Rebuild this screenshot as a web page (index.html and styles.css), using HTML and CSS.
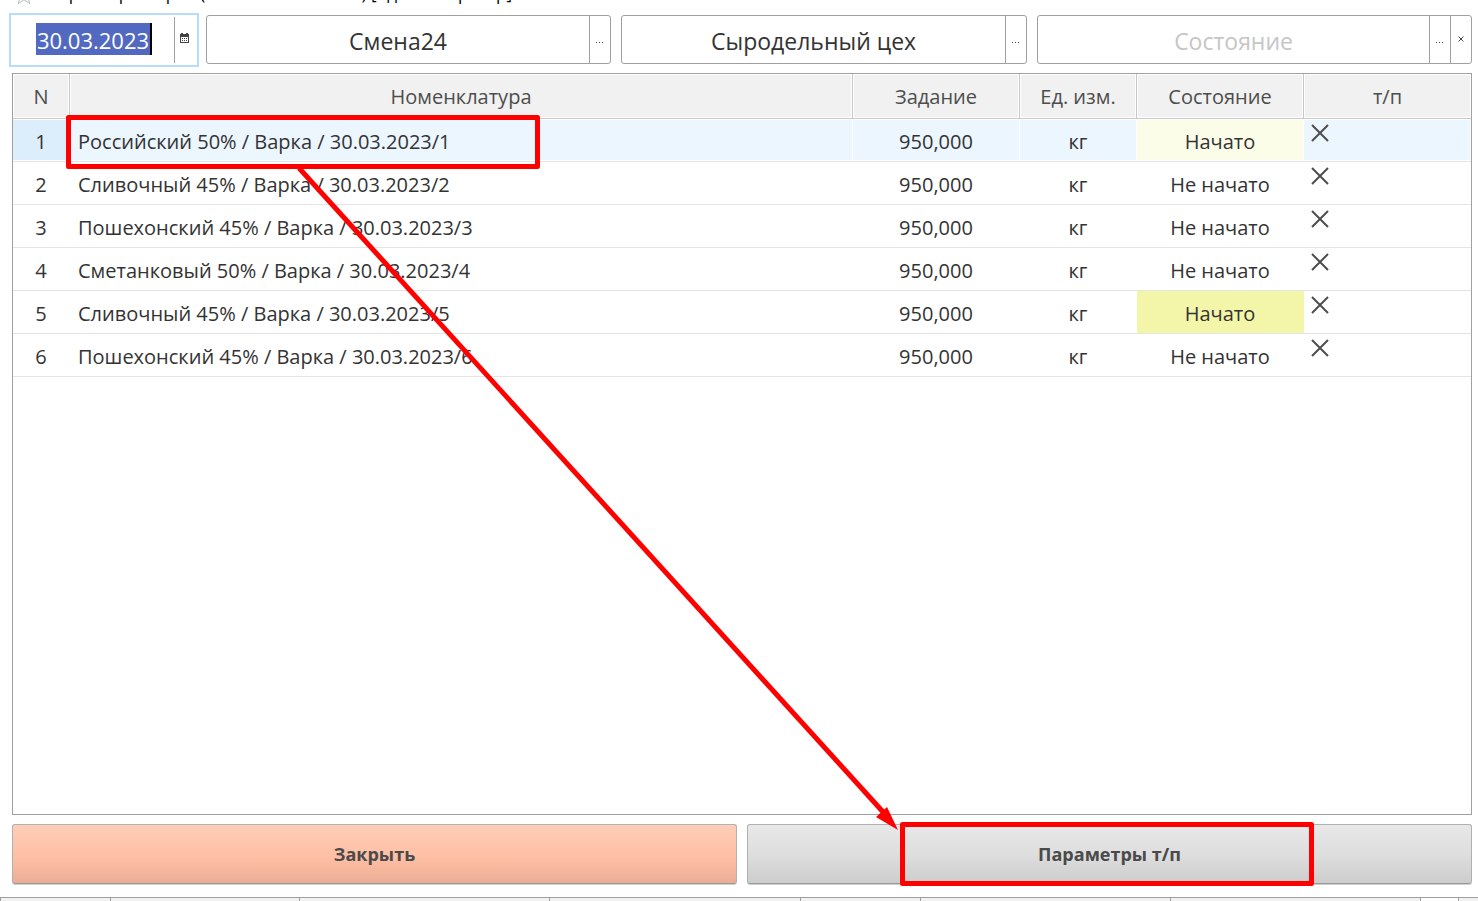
FILE: index.html
```html
<!DOCTYPE html>
<html lang="ru">
<head>
<meta charset="utf-8">
<title>Параметры варки</title>
<link rel="stylesheet" href="styles.css">
</head>
<body>
<header class="title">
  <svg class="star" viewBox="0 0 20 20"><path d="M10 1l2.4 6.4 6.6.3-5.2 4.2 1.9 6.6L10 14.700l-5.700 3.800 1.900-6.600L1 7.700l6.600-.3z"/></svg>
  <h1>Параметры варки (Основной заказ 24) [Администратор]</h1>
</header>
<main class="content">
  <form class="filters">
    <div class="field date">
      <div class="datebox"><input class="selected" type="text" value="30.03.2023" aria-label="Дата"></div>
      <button type="button" aria-label="Календарь"><svg class="cal" viewBox="0 0 9 10"><path d="M0 1h9v9H0zM1 4v5h7V4z" fill-rule="evenodd"/><path d="M1 0h2v1H1zM6 0h2v1H6zM2 5h1v1H2zM4 5h1v1H4zM6 5h1v1H6zM2 7h1v1H2zM4 7h1v1H4zM6 7h1v1H6z"/></svg></button>
    </div>
    <div class="field shift">
      <input type="text" value="Смена24" aria-label="Смена">
      <button type="button" aria-label="Выбрать смену"><svg class="dots" viewBox="0 0 8 1"><path d="M0 0h1v1H0zM3 0h1v1H3zM6 0h1v1H6z"/></svg></button>
    </div>
    <div class="field shop">
      <input type="text" value="Сыродельный цех" aria-label="Цех">
      <button type="button" aria-label="Выбрать цех"><svg class="dots" viewBox="0 0 8 1"><path d="M0 0h1v1H0zM3 0h1v1H3zM6 0h1v1H6z"/></svg></button>
    </div>
    <div class="field state">
      <input type="text" placeholder="Состояние" aria-label="Состояние">
      <button type="button" aria-label="Выбрать состояние"><svg class="dots" viewBox="0 0 8 1"><path d="M0 0h1v1H0zM3 0h1v1H3zM6 0h1v1H6z"/></svg></button>
      <button type="button" class="clear" aria-label="Очистить"><svg class="tiny" viewBox="0 0 6 6"><path d="M.5.5l5 5M5.500.5l-5 5"/></svg></button>
    </div>
  </form>
  <section class="panel">
    <table>
      <colgroup><col class="c-n"><col class="c-name"><col class="c-task"><col class="c-unit"><col class="c-state"><col class="c-tp"></colgroup>
      <thead><tr><th>N</th><th>Номенклатура</th><th>Задание</th><th>Ед. изм.</th><th>Состояние</th><th>т/п</th></tr></thead>
      <tbody>
        <tr class="current"><td>1</td><td class="name">Российский 50% / Варка / 30.03.2023/1</td><td>950,000</td><td>кг</td><td class="started">Начато</td><td class="tp"><svg viewBox="0 0 18 18"><path d="M1 1l16 16M17 1L1 17"/></svg></td></tr>
        <tr><td>2</td><td class="name">Сливочный 45% / Варка / 30.03.2023/2</td><td>950,000</td><td>кг</td><td>Не начато</td><td class="tp"><svg viewBox="0 0 18 18"><path d="M1 1l16 16M17 1L1 17"/></svg></td></tr>
        <tr><td>3</td><td class="name">Пошехонский 45% / Варка / 30.03.2023/3</td><td>950,000</td><td>кг</td><td>Не начато</td><td class="tp"><svg viewBox="0 0 18 18"><path d="M1 1l16 16M17 1L1 17"/></svg></td></tr>
        <tr><td>4</td><td class="name">Сметанковый 50% / Варка / 30.03.2023/4</td><td>950,000</td><td>кг</td><td>Не начато</td><td class="tp"><svg viewBox="0 0 18 18"><path d="M1 1l16 16M17 1L1 17"/></svg></td></tr>
        <tr><td>5</td><td class="name">Сливочный 45% / Варка / 30.03.2023/5</td><td>950,000</td><td>кг</td><td class="started">Начато</td><td class="tp"><svg viewBox="0 0 18 18"><path d="M1 1l16 16M17 1L1 17"/></svg></td></tr>
        <tr><td>6</td><td class="name">Пошехонский 45% / Варка / 30.03.2023/6</td><td>950,000</td><td>кг</td><td>Не начато</td><td class="tp"><svg viewBox="0 0 18 18"><path d="M1 1l16 16M17 1L1 17"/></svg></td></tr>
      </tbody>
    </table>
  </section>
  <div class="actions">
    <button type="button" class="close">Закрыть</button>
    <button type="button" class="params">Параметры т/п</button>
  </div>
</main>
<footer class="tabs"><i class="t1"></i><i class="t2"></i><i class="t3"></i><i class="t3"></i><i class="t4"></i><i class="t3"></i><i class="t3"></i><i class="t5"></i><i class="t6"></i></footer>
<svg class="marks" viewBox="0 0 1478 901" preserveAspectRatio="none" aria-hidden="true">
  <rect x="68.500" y="117.500" width="469" height="49"/>
  <rect x="902.500" y="824.500" width="409" height="59"/>
  <path class="line" d="M299 168L884 813"/>
  <path class="head" d="M898 830L876 817L887 807z"/>
</svg>
</body>
</html>
```
FILE: styles.css
```css
* { box-sizing: border-box; }
body {
  margin: 0;
  min-height: 100vh;
  display: flex;
  flex-direction: column;
  position: relative;
  background: #fff;
  color: #333;
  font-family: "Open Sans", "Noto Sans", sans-serif;
  font-size: 20px;
}
button, input { font: inherit; color: inherit; }
.title {
  height: 5px;
  padding-left: 14px;
  display: flex;
  align-items: flex-end;
  gap: 13px;
  overflow: hidden;
}
.title h1 {
  margin: 0;
  font-size: 17px;
  line-height: 22px;
  font-weight: 400;
  color: #000;
  white-space: nowrap;
}
.star { width: 20px; height: 20px; flex: none; fill: none; stroke: #b4bcc4; }
.content {
  flex: 1;
  display: flex;
  flex-direction: column;
  padding: 8px 6px 13px 12px;
}
.filters { display: flex; align-items: flex-start; gap: 10px; margin-bottom: 6px; }
.field {
  display: flex;
  min-width: 0;
  height: 49px;
  margin-top: 2px;
  border: 1px solid #a0a0a0;
  border-radius: 3px;
  font-size: 23px;
  overflow: hidden;
}
.field input {
  flex: 1;
  min-width: 0;
  border: 0;
  padding: 2px 0 0;
  background: none;
  text-align: center;
  outline: 0;
}
.field input::placeholder { color: #c6c6c6; opacity: 1; }
.field button {
  flex: none;
  width: 21px;
  padding: 0;
  border: 0;
  border-left: 1px solid #a0a0a0;
  background: none;
  display: flex;
  align-items: center;
  justify-content: center;
}
.field svg { fill: #444; display: block; }
.dots { width: 8px; height: 1px; margin-top: 6px; }
.tiny { width: 6px; height: 6px; stroke: #444; }
.cal { width: 9px; height: 10px; }
.field .clear { padding-bottom: 1px; }
.date {
  flex: none;
  width: 190px;
  height: 54px;
  border: 2px solid #b8dcfa;
  border-radius: 0;
  margin: 0 -3px 0 -3px;
  padding: 2px 0;
}
.datebox { flex: 1; display: flex; align-items: center; justify-content: center; padding: 0 0 2px 3px; }
.date .datebox .selected {
  flex: none;
  width: 116px;
  height: 32px;
  padding: 2px 0 0;
  border-right: 2px solid #000;
  background: #5169c1;
  color: #fff;
  font-size: 22px;
}
.date button { width: 23px; padding: 0 4px 4px 0; }
.shift { flex: 405 1 0; }
.shop { flex: 406 1 0; }
.state { flex: 435 1 0; }
.panel { flex: 1; border: 1px solid #a0a0a0; }
table { width: 100%; border-collapse: separate; border-spacing: 0; table-layout: fixed; }
.c-n { width: 57px; }
.c-task { width: 167px; }
.c-unit { width: 117px; }
.c-state { width: 167px; }
.c-tp { width: 167px; }
th {
  height: 45px;
  padding: 0;
  font-weight: 400;
  color: #4d4d4d;
  background: #f1f1f1;
  border-right: 1px solid #c8c8c8;
  border-bottom: 1px solid #c8c8c8;
  box-shadow: inset 0 0 0 1px #fff;
}
th:last-child { border-right: 0; }
td {
  height: 43px;
  padding: 4px 1px 0 0;
  text-align: center;
  line-height: 28px;
  border-bottom: 1px solid #e4e4e4;
}
td.name { text-align: left; padding-left: 8px; }
td.started { background: #f3f5a9; }
td.tp { vertical-align: top; padding: 5px 0 0 7px; }
td svg { display: block; width: 18px; height: 18px; fill: none; stroke: #4d4d4d; stroke-width: 2; }
.current td { background: #ecf6fe; box-shadow: inset -1px -1px #fff, inset 0 1px #fff; }
.current td:first-child { background: #dceefb; }
.current td.started { background: #fbfde8; }
.actions { display: grid; grid-template-columns: 1fr 1fr; gap: 10px; margin-top: 9px; }
.actions button {
  height: 60px;
  padding: 0;
  border: 1px solid #b0b0b0;
  border-bottom-color: #999;
  border-radius: 3px;
  font-size: 18px;
  font-weight: 700;
  color: #4a4a4a;
  box-shadow: 0 1px #d0d0d0;
}
.close { background: linear-gradient(#ffcdb8, #ffbfa5 55%, #ebad96); }
.params { background: linear-gradient(#e8e8e8, #dedede 50%, #cdcdcd); }
.tabs { display: flex; height: 4px; border-top: 1px solid #a0a0a0; }
.tabs i { border-left: 1px solid #a0a0a0; background: #f1f1f1; }
.t1 { flex: 110; }
.t2 { flex: 189; }
.t3 { flex: 251; }
.t4 { flex: 120; }
.tabs .t5 { flex: 37; background: #fff; }
.t6 { flex: 19; }
.marks { position: absolute; inset: 0; width: 100%; height: 100%; pointer-events: none; }
.marks rect { fill: none; stroke: #f00; stroke-width: 5; stroke-linejoin: round; }
.line { stroke: #f00; stroke-width: 5; }
.head { fill: #f00; }
```
